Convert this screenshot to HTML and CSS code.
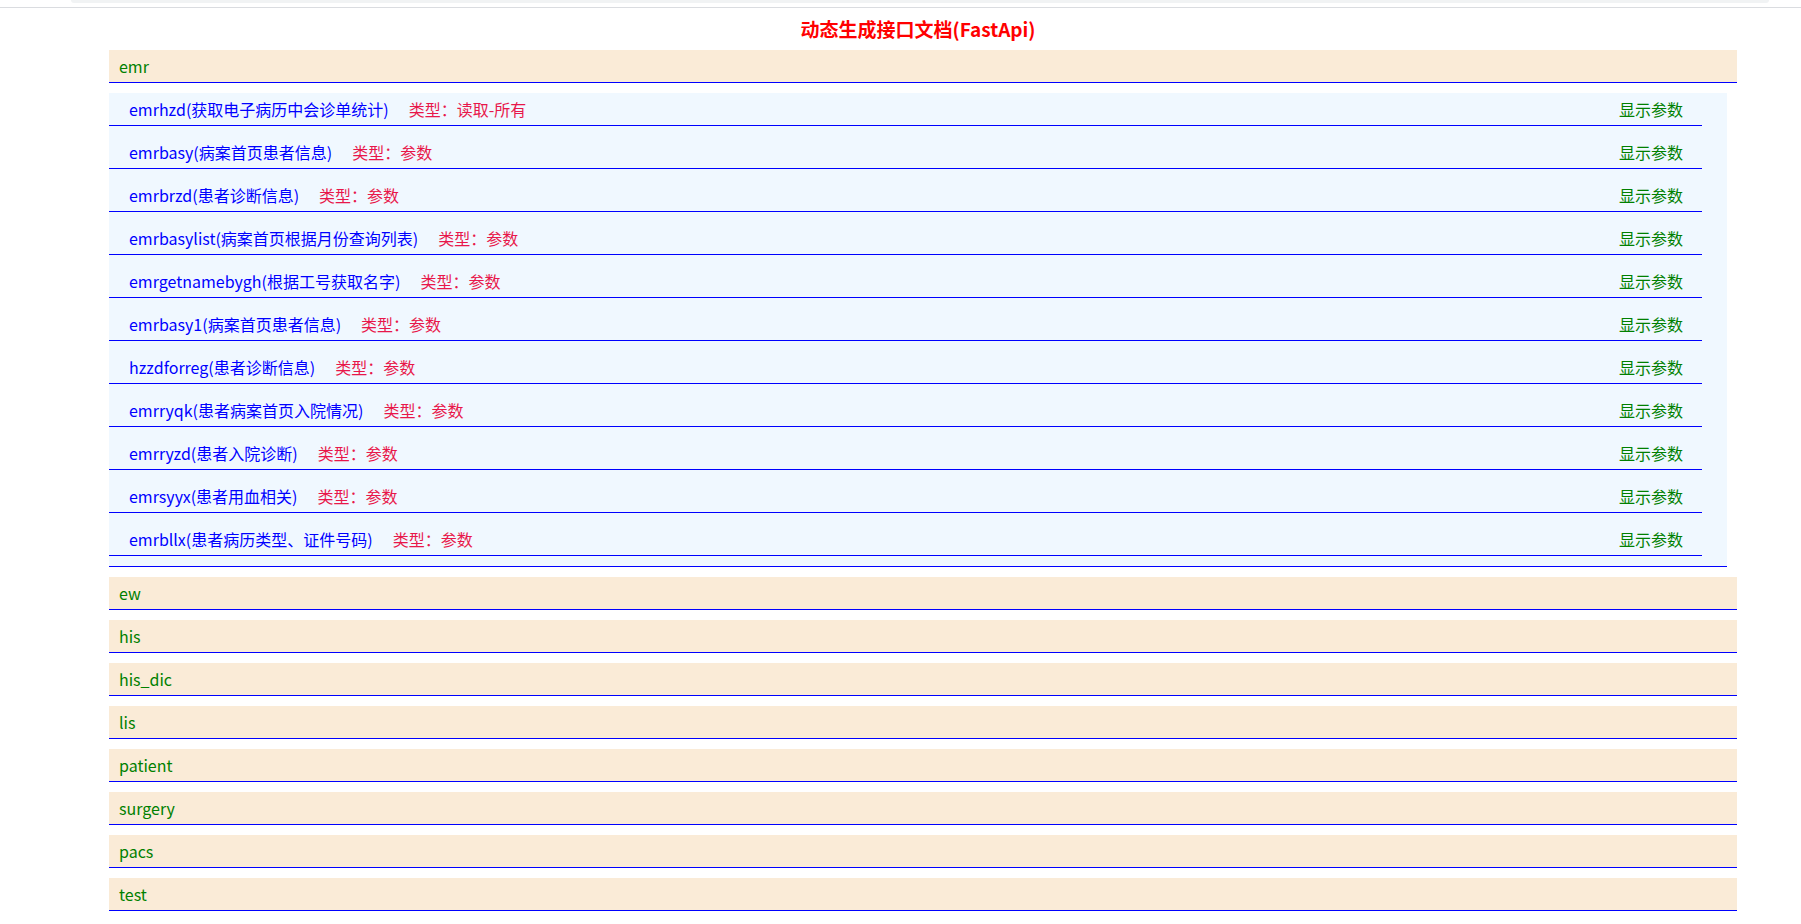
FILE: index.html
```html
<!DOCTYPE html>
<html lang="zh-CN">
<head>
<meta charset="utf-8">
<title>动态生成接口文档(FastApi)</title>
<link rel="stylesheet" href="styles.css">
</head>
<body>
<div class="topbar"><div class="tab"></div></div>
<div class="container">
  <h1 class="title">动态生成接口文档(FastApi)</h1>
  <div class="group">
    <div class="group-head">emr</div>
    <div class="panel">
      <div class="row"><div><span class="name">emrhzd(获取电子病历中会诊单统计)</span><span class="type">类型：读取-所有</span></div><span class="show">显示参数</span></div>
      <div class="row"><div><span class="name">emrbasy(病案首页患者信息)</span><span class="type">类型：参数</span></div><span class="show">显示参数</span></div>
      <div class="row"><div><span class="name">emrbrzd(患者诊断信息)</span><span class="type">类型：参数</span></div><span class="show">显示参数</span></div>
      <div class="row"><div><span class="name">emrbasylist(病案首页根据月份查询列表)</span><span class="type">类型：参数</span></div><span class="show">显示参数</span></div>
      <div class="row"><div><span class="name">emrgetnamebygh(根据工号获取名字)</span><span class="type">类型：参数</span></div><span class="show">显示参数</span></div>
      <div class="row"><div><span class="name">emrbasy1(病案首页患者信息)</span><span class="type">类型：参数</span></div><span class="show">显示参数</span></div>
      <div class="row"><div><span class="name">hzzdforreg(患者诊断信息)</span><span class="type">类型：参数</span></div><span class="show">显示参数</span></div>
      <div class="row"><div><span class="name">emrryqk(患者病案首页入院情况)</span><span class="type">类型：参数</span></div><span class="show">显示参数</span></div>
      <div class="row"><div><span class="name">emrryzd(患者入院诊断)</span><span class="type">类型：参数</span></div><span class="show">显示参数</span></div>
      <div class="row"><div><span class="name">emrsyyx(患者用血相关)</span><span class="type">类型：参数</span></div><span class="show">显示参数</span></div>
      <div class="row"><div><span class="name">emrbllx(患者病历类型、证件号码)</span><span class="type">类型：参数</span></div><span class="show">显示参数</span></div>
    </div>
  </div>
  <div class="group"><div class="group-head">ew</div></div>
  <div class="group"><div class="group-head">his</div></div>
  <div class="group"><div class="group-head">his_dic</div></div>
  <div class="group"><div class="group-head">lis</div></div>
  <div class="group"><div class="group-head">patient</div></div>
  <div class="group"><div class="group-head">surgery</div></div>
  <div class="group"><div class="group-head">pacs</div></div>
  <div class="group"><div class="group-head">test</div></div>
</div>
</body>
</html>
```
FILE: styles.css
```css
html, body {
  margin: 0;
  padding: 0;
  background: #ffffff;
}
body {
  font-family: "Noto Sans CJK SC", "Noto Sans", sans-serif;
  font-size: 16px;
}
.topbar {
  height: 7px;
  border-bottom: 1px solid #dadce0;
}
.tab {
  margin-left: 71px;
  width: 1698px;
  height: 3px;
  background: #f1f3f4;
  border-bottom-right-radius: 4px;
  border-bottom-left-radius: 4px;
}
.container {
  margin-left: 109px;
  width: 1628px;
}
.title {
  margin: 0;
  padding-right: 10px;
  height: 42px;
  line-height: 42px;
  font-size: 19px;
  font-weight: bold;
  color: #ff0000;
  text-align: center;
}
.group-head {
  height: 32px;
  line-height: 32px;
  padding-left: 10px;
  background: #faebd7;
  color: #008000;
  border-bottom: 1px solid #0000ff;
  margin-bottom: 10px;
}
.panel {
  margin-right: 10px;
  padding-right: 25px;
  background: #f0f8ff;
  border-bottom: 1px solid #0000ff;
  margin-bottom: 10px;
}
.row {
  display: flex;
  justify-content: space-between;
  align-items: center;
  height: 32px;
  line-height: 32px;
  padding: 0 19px 0 20px;
  border-bottom: 1px solid #0000ff;
  margin-bottom: 10px;
}
.name {
  color: #0000ff;
}
.type {
  color: #e8174a;
  margin-left: 20px;
}
.show {
  color: #008000;
}
```
